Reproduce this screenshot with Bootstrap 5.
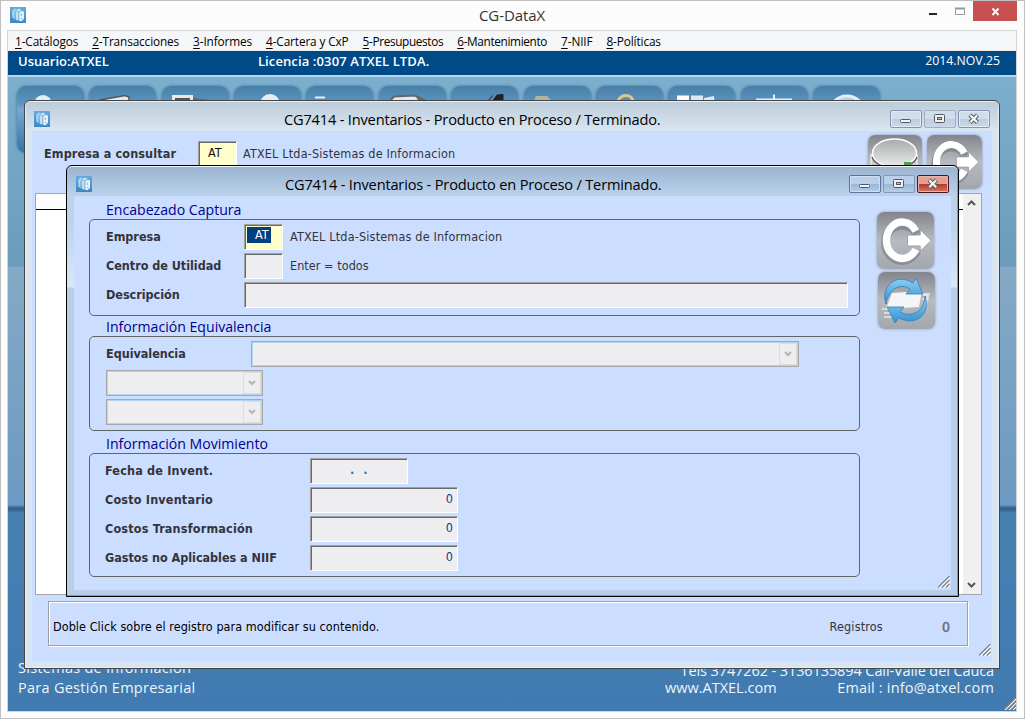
<!DOCTYPE html>
<html lang="es">
<head>
<meta charset="utf-8">
<title>CG-DataX</title>
<link href="https://cdn.jsdelivr.net/npm/bootstrap@5.3.0/dist/css/bootstrap.min.css" rel="stylesheet">
<style>
body{width:1025px;height:719px;overflow:hidden;font-family:"Open Sans","Noto Sans",sans-serif;font-size:12px;line-height:18px;color:#000}
span{white-space:nowrap}
svg{display:block;flex:none}
.app{width:1025px;height:719px;background:#fcfcfc;border:1px solid #c0c0c0;padding:0 7px 7px 6px}
.app-title{height:29px}
.app-name{margin:5px 0 0 453px;color:#333;font-size:15px;letter-spacing:-.1px}
.inner{border:1px solid #d4d4d4;height:682px}
.menu{height:20px;background:#f5f6f8;padding:1px 0 0 7px;border-bottom:1px solid #ececec;gap:14px;font-size:11.8px;letter-spacing:-.12px}
.menu u{text-underline-offset:2px}
.menu .tight{letter-spacing:-.35px}
.userbar{height:24px;background:#004a88;color:#fff;padding:1px 16px 0 10px;font-size:13px}
.userbar .lic{margin-left:149px;letter-spacing:.12px}
.userbar .fecha{font-size:12.3px}
.desk{height:636px;padding:9px 22px 13px 8px;border-top:2px solid #b5d6e8;background:linear-gradient(#7caecd 0,#6b9cbb 189px,#84a9c5 190px,#6d9ac2 428px,#3c6c99 430px,#2f5f8c 432px,#4781b3 436px,#407ab0 634px)}
.tiles{gap:5.36px;padding-left:1px}
.tile{width:67px;height:67px;border-radius:9px;background:linear-gradient(#4880a8,#5b92bf 16px,#74a7d2 24px,#3274aa 66px);box-shadow:0 0 3px #3f708f;overflow:hidden}
.white{color:#eef5fb;font-size:14.5px}
.slogan{line-height:20px;padding-left:2px;letter-spacing:.27px}
.contact{line-height:17px;width:329px;padding-bottom:2px}
.contact>span{letter-spacing:-.1px}
.win{position:absolute;border-radius:6px 6px 0 0;padding:0 7px}
.win1{left:24px;top:100px;width:976px;height:569px;border:1px solid #444;background:linear-gradient(#bccbd9,#dae6f1 30px,#d7e4f1);box-shadow:inset 0 0 0 1px #e6eef6}
.win2{left:66px;top:165px;width:893px;height:432px;border:1px solid #000;background:linear-gradient(#9ab3cf,#bbd2ec 30px,#bdd4ec 60px,#dbe8f6 121px,#b8cfe9 122px);box-shadow:inset 0 1px 0 #eef6fc,inset -1px -1px 0 #3ab8d8}
.wtitle{height:30px;padding:0 2px;font-size:14.6px;letter-spacing:-.18px}
.wname{margin:9px 0 0 234px}
.win2 .wname{margin-left:193px}
.wbs{gap:2px;margin-top:9px}
.pane{background:#ccdeff}
.win1 .pane{height:531px}
.win2 .pane{height:394px}
.wb{width:32px;height:18px;border:1px solid #8895b2;border-radius:2px;background:linear-gradient(#d0deec 50%,#bdcde0 50%,#cbd9e8);box-shadow:inset 0 0 0 1px #dfe9f4}
.wb.dim{border-color:#a3aec2;box-shadow:none}
.win2 .wb{background:linear-gradient(#bad0ea 50%,#9cb7d5 50%,#b3cdea);border-color:#5f7397;box-shadow:inset 0 0 0 1px #cfe0f2}
.win2 .wb.dim{border-color:#8198b8;box-shadow:none}
.win2 .wb.red{background:linear-gradient(#e0a297 50%,#b63a22 50%,#d0786a);border-color:#4a1520;box-shadow:inset 0 0 0 1px #eab6ac}
.tah,.lbl{font-family:"DejaVu Sans Condensed","DejaVu Sans",sans-serif;font-stretch:condensed;font-size:12.5px;letter-spacing:.06px;color:#33333b}
.lbl{font-weight:700;letter-spacing:-.03px}
.ls2{letter-spacing:.18px}
.topbar{height:62px;padding:10px 10px 0 12px}
.topbar>span{line-height:25px}
.fld{height:26px;background:#eeeef0;border:1px solid;border-color:#a0a0a0 #fff #fff #a0a0a0;box-shadow:inset 1px 1px 0 #696969;flex:none}
.yel{background:#ffffcc}
.w39{width:39px}.w98{width:98px}.w148{width:148px}.w157{width:157px}.w548{width:548px}.w604{width:604px}
.num{color:#0a3c82;text-align:right;padding:2px 4px 0 0}
.date{color:#1a7ab8;font-weight:700;padding:2px 0 0 39px;word-spacing:5px;white-space:pre}
.sel{height:26px;background:#eeeef0;border:1px solid #a9a9ab;box-shadow:inset 0 0 0 1px #b3d3ee;padding:1px;display:flex;justify-content:flex-end;flex:none}
.sel svg{border:1px solid #dcdcdc}
.grp{border:1px solid #646464;border-radius:5px;width:771px;padding:4px 0 0 16px;display:flex;flex-direction:column;gap:3px;margin-left:15px}
.g1{height:97px}.g2{height:95px}.g3{height:124px;padding-left:15px}
.frow{height:26px;display:flex}
.frow>span{line-height:25px}
.c1{width:138px}.c2{width:145px}.c3{width:205px}
.gt{color:#00008b;font-size:14.1px;padding-left:32px;line-height:20px;display:block}
.gt1{padding-top:4px;height:23px}.gt2{padding-top:1px;height:20px}.gt3{padding-top:3px;height:22px}
.ibtn{border-radius:7px;background:linear-gradient(#83858c,#b8bac2 50%,#a4a6ae);box-shadow:0 0 3px #8f96a8}
.hl{background:#004080;width:24px;height:16px;line-height:15px;margin:2px 0 0 2px;padding-left:8px;letter-spacing:0;color:#fff}
.list{height:402px;border:1px solid #a6a6a6;background:#fff;margin:0 10px 0 3px}
.lhead{height:16px;background:#fcfcfc;border-bottom:1px solid #000}
.scr{width:18px;background:#f0f0f0}
.foot{width:920px;height:45px;border:1px solid #a0a0a0;box-shadow:inset 1px 1px 0 #fff,1px 1px 0 #fff;margin:6px 0 0 16px;padding:6px 17px 0 4px}
.count{margin-left:59px;color:#666;font-size:14px;-webkit-text-stroke:.5px #777}
.grip{position:absolute;right:8px;bottom:8px}
</style>
</head>
<body>
<svg width="0" height="0" class="position-absolute">
<defs>
<linearGradient id="blu" x1="0" y1="0" x2="0" y2="1"><stop offset="0" stop-color="#8dd0f4"/><stop offset="1" stop-color="#3390d4"/></linearGradient>
<linearGradient id="met" x1="0" y1="0" x2="0" y2="1"><stop offset="0" stop-color="#a8aaaa"/><stop offset="1" stop-color="#ececec"/></linearGradient>
<linearGradient id="ab" x1="0" y1="0" x2="0" y2="1"><stop offset="0" stop-color="#62acdc"/><stop offset="1" stop-color="#3f86c6"/></linearGradient>
<symbol id="app" viewBox="0 0 16 16"><rect width="16" height="16" fill="url(#ab)"/><path d="M2 4 4.500 1.600 7 2.200 5 4V12L2.500 11Z" fill="#a9d3ee"/><path d="M5.200 4.400 8.400 1.500 11.500 2.400 9 5V14L5.600 12.500Z" fill="#c2e1f4"/><path d="M8.800 6 11.500 3.800 14 4.400V11.800L11.500 14.300 9.200 13.800Z" fill="#e6f3fb"/><path d="M5 4.500v7.500M8.800 6v8M11.200 6.500v2.500M11 11.500h1.500M6.500 4.500 9 5.300" stroke="#5795c2" stroke-width=".7" fill="none"/></symbol>
<symbol id="exit" viewBox="0 0 58 58"><path d="M40.500 21A17.200 18 0 1 0 40.500 38" fill="none" stroke="#555a64" stroke-opacity=".35" stroke-width="8.500" transform="translate(0 2)"/><path d="M39.500 19.500A16 18.500 0 1 0 39.500 38" fill="none" stroke="#fff" stroke-width="7.500"/><path d="M31 23.500H44V18L55 29 44 40V34.500H31Z" fill="#fff" stroke="#8f929a" stroke-width=".8"/></symbol>
<symbol id="grip" viewBox="0 0 12 12"><path d="M1 12 12 1M5 12 12 5M9 12 12 9" stroke="#fff" stroke-width="1.400"/><path d="M0 11.500 11.500 0M4 11.500 11.500 4M8 11.500 11.500 8" stroke="#7d8087" stroke-width="1.300"/></symbol>
<symbol id="bmin" viewBox="0 0 30 16"><rect x="9.500" y="8.500" width="10" height="3" rx="1" fill="#f4f4f4" stroke="#535666"/></symbol>
<symbol id="bmax" viewBox="0 0 30 16"><rect x="9.500" y="3.500" width="10" height="8" rx="1" fill="#f0f0f0" stroke="#535666"/><rect x="12.500" y="6.500" width="4" height="2" fill="#bcd" stroke="#535666"/></symbol>
<symbol id="bx" viewBox="0 0 30 16"><path d="M11 4 18.500 11.500M18.500 4 11 11.500" stroke="#535666" stroke-width="4.200"/><path d="M11.300 4.300 18.200 11.200M18.200 4.300 11.300 11.200" stroke="#f4f4f4" stroke-width="2.300"/></symbol>
<symbol id="dd" viewBox="0 0 16 20"><path d="M5 8 8 11 11 8" fill="none" stroke="#b5b5b5" stroke-width="2"/></symbol>
</defs>
</svg>
<div class="app position-relative">
  <div class="app-title d-flex">
    <svg width="16" height="16" style="margin:6px 0 0 3px"><use href="#app"/></svg>
    <span class="app-name">CG-DataX</span>
    <svg class="ms-auto" width="88" height="20"><path d="M0 13h8" stroke="#222" stroke-width="2"/><path d="M26.500 7v6.500h9V7" fill="none" stroke="#999"/><path d="M26 7.500h10" stroke="#999" stroke-width="2"/><rect x="44" width="45" height="20" fill="#c75050"/><path d="M63.500 7.500l6 6.500M69.500 7.500l-6 6.500" stroke="#fff" stroke-width="1.900"/></svg>
  </div>
  <div class="inner">
    <div class="menu d-flex">
      <span><u>1</u>-Catálogos</span><span><u>2</u>-Transacciones</span><span><u>3</u>-Informes</span><span><u>4</u>-Cartera y CxP</span><span class="tight"><u>5</u>-Presupuestos</span><span class="tight"><u>6</u>-Mantenimiento</span><span><u>7</u>-NIIF</span><span><u>8</u>-Políticas</span>
    </div>
    <div class="userbar d-flex fw-semibold"><span>Usuario:ATXEL</span><span class="lic">Licencia :0307 ATXEL LTDA.</span><span class="fecha fw-normal ms-auto">2014.NOV.25</span></div>
    <div class="desk white d-flex flex-column justify-content-between">
      <div class="tiles d-flex">
        <div class="tile"><svg width="67" height="67"><circle cx="26" cy="18" r="9" fill="#e6eef5"/></svg></div>
        <div class="tile"><svg width="67" height="67"><path d="M11 14 36 9.500 40 11V26H8Z" fill="#dfeaf3" stroke="#555" stroke-width="1.500"/></svg></div>
        <div class="tile"><svg width="67" height="67"><path d="M10 9h21v15H10z" fill="#e8e8e6"/><path d="M13 12h15v12H13z" fill="#555"/><path d="M31 12 55 15 31 17Z" fill="#666"/></svg></div>
        <div class="tile"><svg width="67" height="67"><circle cx="36" cy="18" r="10" fill="#e6eef5"/></svg></div>
        <div class="tile"><svg width="67" height="67"><path d="M9 11.500h10" stroke="#e6eef5" stroke-width="2"/></svg></div>
        <div class="tile"><svg width="67" height="67"><path d="M10 16 15 10.500 36 9.500 49 16" fill="#dfeaf3" stroke="#666" stroke-width="2"/><path d="M36 9 50 16H40Z" fill="#666"/></svg></div>
        <div class="tile"><svg width="67" height="67"><path d="M36 16 42 9.500M41 16 46 9 52 8.500V16Z" fill="#222" stroke="#222"/></svg></div>
        <div class="tile"><svg width="67" height="67"><path d="M9 16 12 10H23L27 14H45V18H9Z" fill="#b0b49e"/></svg></div>
        <div class="tile"><svg width="67" height="67"><path d="M22 17C22 7 38 7 37 17" fill="none" stroke="#dfc788" stroke-width="3"/><path d="M43 16l6-2 4 3" fill="#d0cbb0"/></svg></div>
        <div class="tile"><svg width="67" height="67"><path d="M9 9.500h12V22H9z" fill="#fff"/><path d="M23 9.500h12V22H23zM36 12 46 10l1 10H36z" fill="#dce8f2"/></svg></div>
        <div class="tile"><svg width="67" height="67"><path d="M15 13.500h36M33 8.500v12M18 13v4M48 13v4" stroke="#e6eef5" stroke-width="2"/></svg></div>
        <div class="tile"><svg width="67" height="67"><circle cx="34" cy="28" r="18" fill="#b8cfe2" stroke="#e4edf5" stroke-width="3"/></svg></div>
      </div>
      <div class="d-flex justify-content-between align-items-end">
        <div class="slogan"><span>Sistemas de Información</span><br><span>Para Gestión Empresarial</span></div>
        <div class="contact text-end"><span>Tels 3747262 - 3136135894 Cali-Valle del Cauca</span>
          <div class="d-flex justify-content-between"><span>www.ATXEL.com</span><span style="letter-spacing:.18px">Email : info@atxel.com</span></div></div>
      </div>
    </div>
  </div>
  <svg class="grip" width="12" height="12"><use href="#grip"/></svg>
</div>

<div class="win win1">
  <div class="wtitle d-flex">
    <svg width="16" height="16" style="margin-top:10px"><use href="#app"/></svg><span class="wname">CG7414 - Inventarios - Producto en Proceso / Terminado.</span>
    <div class="wbs d-flex ms-auto"><div class="wb"><svg width="30" height="16"><use href="#bmin"/></svg></div><div class="wb dim"><svg width="30" height="16"><use href="#bmax"/></svg></div><div class="wb"><svg width="30" height="16"><use href="#bx"/></svg></div></div>
  </div>
  <div class="pane">
    <div class="topbar d-flex">
      <span class="lbl" style="letter-spacing:.12px;width:154px">Empresa a consultar</span><div class="fld yel w39 tah" style="padding:2px 0 0 9px;color:#111">AT</div><span class="tah ls2" style="margin-left:6px">ATXEL Ltda-Sistemas de Informacion</span>
      <div class="d-flex ms-auto" style="gap:5px;margin-top:-6px">
        <div class="ibtn" style="width:54px;height:54px"><svg width="54" height="54"><path d="M3 19v20c8 12 38 12 46 0V19" fill="#c8caca" stroke="#fff"/><ellipse cx="26.500" cy="18" rx="22" ry="14" fill="url(#met)" stroke="#fff" stroke-width="1.500"/><path d="M4 22a23 14 0 0 0 45 0" fill="none" stroke="#555" stroke-width="1.200"/><path d="M36 27h7v6h-7z" fill="#4fa04c"/></svg></div>
        <div class="ibtn" style="width:55px;height:54px"><svg width="55" height="54"><use href="#exit"/></svg></div>
      </div>
    </div>
    <div class="list d-flex"><div class="flex-grow-1"><div class="lhead"></div></div>
      <div class="scr d-flex flex-column justify-content-between"><svg width="18" height="18"><path d="M5 11 8.500 7.500 12 11" fill="none" stroke="#555" stroke-width="2"/></svg><svg width="18" height="18"><path d="M5 7 8.500 10.500 12 7" fill="none" stroke="#555" stroke-width="2"/></svg></div></div>
    <div class="foot d-flex align-items-center"><span class="tah" style="color:#000">Doble Click sobre el registro para modificar su contenido.</span><span class="tah ls2 ms-auto">Registros</span><span class="tah count">0</span></div>
  </div>
  <svg class="grip" width="12" height="12" style="bottom:12px"><use href="#grip"/></svg>
</div>

<div class="win win2">
  <div class="wtitle d-flex">
    <svg width="16" height="16" style="margin-top:10px"><use href="#app"/></svg><span class="wname">CG7414 - Inventarios - Producto en Proceso / Terminado.</span>
    <div class="wbs d-flex ms-auto"><div class="wb"><svg width="30" height="16"><use href="#bmin"/></svg></div><div class="wb dim"><svg width="30" height="16"><use href="#bmax"/></svg></div><div class="wb red"><svg width="30" height="16"><use href="#bx"/></svg></div></div>
  </div>
  <div class="pane d-flex">
    <div>
      <span class="gt gt1">Encabezado Captura</span>
      <div class="grp g1">
        <div class="frow"><span class="lbl c1">Empresa</span><div class="fld yel w39"><div class="tah hl text-white">AT</div></div><span class="tah ls2" style="margin-left:7px">ATXEL Ltda-Sistemas de Informacion</span></div>
        <div class="frow"><span class="lbl c1">Centro de Utilidad</span><div class="fld w39"></div><span class="tah" style="margin-left:7px">Enter = todos</span></div>
        <div class="frow"><span class="lbl c1">Descripción</span><div class="fld w604"></div></div>
      </div>
      <span class="gt gt2">Información Equivalencia</span>
      <div class="grp g2">
        <div class="frow"><span class="lbl c2">Equivalencia</span><div class="sel w548"><svg width="18" height="22"><use href="#dd"/></svg></div></div>
        <div class="sel w157"><svg width="18" height="22"><use href="#dd"/></svg></div>
        <div class="sel w157"><svg width="18" height="22"><use href="#dd"/></svg></div>
      </div>
      <span class="gt gt3">Información Movimiento</span>
      <div class="grp g3">
        <div class="frow"><span class="lbl c3 ls2">Fecha de Invent.</span><div class="fld w98 tah date">. .</div></div>
        <div class="frow"><span class="lbl c3 ls2">Costo Inventario</span><div class="fld w148 tah num">0</div></div>
        <div class="frow"><span class="lbl c3 ls2">Costos Transformación</span><div class="fld w148 tah num">0</div></div>
        <div class="frow"><span class="lbl c3">Gastos no Aplicables a NIIF</span><div class="fld w148 tah num">0</div></div>
      </div>
    </div>
    <div class="d-flex flex-column" style="gap:3px;margin:16px 0 0 17px">
      <div class="ibtn" style="width:57px;height:57px"><svg width="57" height="57"><use href="#exit"/></svg></div>
      <div class="ibtn" style="width:57px;height:57px;margin-left:1px"><svg width="57" height="57">
        <path d="M4 37h14M6 41h12M6 45h10M44 22h8M44 27h7" stroke="#d8dadd" stroke-width="2"/>
        <path d="M14 21 44 19 41 35 8 37Z" fill="#f4f5f6"/><path d="M44 22 50 24 46 38" fill="none" stroke="#e8e8ea" stroke-width="2"/>
        <path d="M8 32C2 15 18 0 35 11L38 6 45 22 28 22 32 17C22 10 10 18 8 32Z" fill="url(#blu)" stroke="#3a7fb0" stroke-width=".8"/>
        <path d="M47 24C53 42 38 55 21 46L17 51 9 35 26 35 22 40C34 46 46 40 47 24Z" fill="url(#blu)" stroke="#3a7fb0" stroke-width=".8"/></svg></div>
    </div>
  </div>
  <svg class="grip" width="12" height="12"><use href="#grip"/></svg>
</div>
</body>
</html>
